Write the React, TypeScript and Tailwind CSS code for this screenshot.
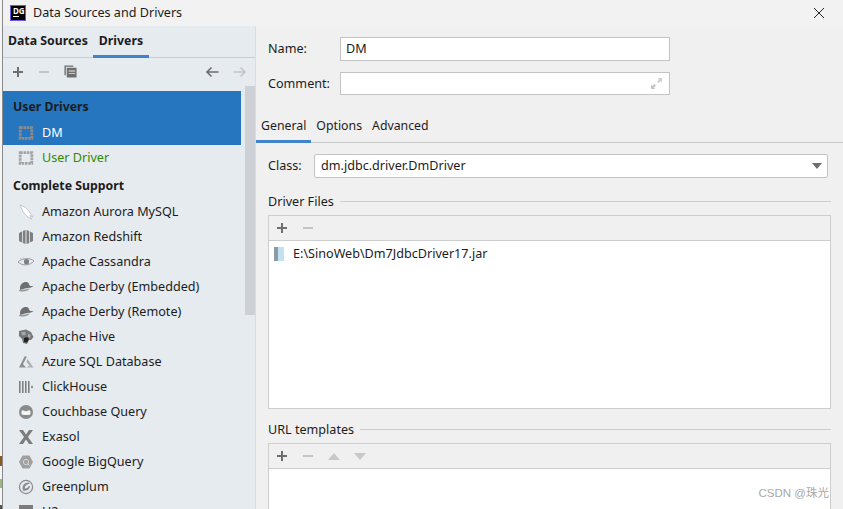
import type { ReactNode } from 'react'

const G = '#8c8c8c'

/* 16px icon wrapper */
function Ico({ children }: { children: ReactNode }) {
  return (
    <svg width="16" height="16" viewBox="0 0 16 16" className="shrink-0">
      {children}
    </svg>
  )
}

// dotted square used for custom drivers
function DriverIcon({ color = G }: { color?: string }) {
  return (
    <Ico>
      <path d="M2.2 2.7 H13.8 V13.3 H2.2Z" fill="none" stroke={color} strokeWidth="2.8" strokeDasharray="2.6 0.7" />
    </Ico>
  )
}

const icons: Record<string, ReactNode> = {
  aurora: (
    <Ico>
      <path d="M2 1 C6 2 10 5 12 9 L15 13 L12 11.5 C12 13 13 14 14 15 C10 14 8 11 6 9 C4 7 4 4 2 1Z" fill="#fff" stroke="#b9bdc1" strokeWidth="0.8" />
    </Ico>
  ),
  redshift: (
    <Ico>
      <path d="M1 4 L4 2.5 V13.5 L1 12Z M4.8 2 L7.5 1 V15 L4.8 14Z M8.5 1 L11.2 2 V14 L8.5 15Z M12 2.5 L15 4 V12 L12 13.5Z" fill="#7f7f7f" />
    </Ico>
  ),
  eye: (
    <Ico>
      <path d="M0 8 C4 4 12 3.5 16 7 C12 12 4 12 0 8Z" fill="none" stroke="#9a9a9a" strokeWidth="1" />
      <circle cx="8.5" cy="7.7" r="2.6" fill="#7f7f7f" />
      <path d="M2 4.5 L4.5 6 M5 3.5 L6.5 5.5 M12 3.5 L11 5" stroke="#aaa" strokeWidth="0.7" />
    </Ico>
  ),
  derby: (
    <Ico>
      <path d="M2 9.5 C2 5 5 2.5 9 3 C11 3.5 11 6 12 7 L15.5 7 C14 8.5 11 9 7 9.5 L2 11Z" fill="#6f6f6f" />
      <path d="M1 12 C6 13.5 10 12 12 9.5 L7 10.5 L1 11Z" fill="#9a9a9a" />
    </Ico>
  ),
  hive: (
    <Ico>
      <path d="M1 2 L8 0.5 L13 3 L15.5 8 L13 11 L11 11 L9 15 L5 14 L4 10 L1 7Z" fill="#777" />
      <path d="M6 9 L9 8 L11 10 L9 13.5 L6 13Z" fill="#222" />
      <path d="M3 3.5 L7 2.5 L8 5.5 L4.5 6.5Z M10 4.5 L13 6 L12 9 L10 8Z" fill="#a8a8a8" />
    </Ico>
  ),
  azure: (
    <Ico>
      <path d="M1 13.5 L6.5 2.5 L9 2.5 L5 10 L8 13.5Z" fill="#8f8f8f" />
      <path d="M9.5 5 L15.5 13.5 L8.5 13.5 L11.5 11.5 L8.5 8Z" fill="#b0b0b0" />
    </Ico>
  ),
  click: (
    <Ico>
      <path d="M1 2 H2.6 V14 H1Z M4 2 H5.6 V14 H4Z M7 2 H8.6 V14 H7Z M10 2 H11.6 V14 H10Z M13.2 6.8 H14.8 V9.2 H13.2Z" fill="#808080" />
    </Ico>
  ),
  couch: (
    <Ico>
      <circle cx="8" cy="8" r="7" fill="#8a8a8a" />
      <path d="M3.5 8.2 C3.5 6 5 6 6 6.8 C7 7.4 9 7.4 10 6.8 C11 6 12.5 6 12.5 8.2 V9.8 C12.5 11 11 11 8 11 C5 11 3.5 11 3.5 9.8Z" fill="#f4f5f6" />
    </Ico>
  ),
  exasol: (
    <Ico>
      <path d="M1 1 H5 L8 5.5 L11 1 H15 L10 8 L15 15 H11 L8 10.5 L5 15 H1 L6 8Z" fill="#7c7c7c" />
    </Ico>
  ),
  bigquery: (
    <Ico>
      <path d="M4.5 1.5 H11.5 L15 8 L11.5 14.5 H4.5 L1 8Z" fill="#a0a0a0" />
      <circle cx="8" cy="8" r="2.6" fill="none" stroke="#d8d8d8" strokeWidth="1" />
      <path d="M9.8 9.8 L11.5 11.5" stroke="#d8d8d8" strokeWidth="1" />
    </Ico>
  ),
  green: (
    <Ico>
      <circle cx="8" cy="8" r="6.6" fill="none" stroke={G} strokeWidth="1.2" />
      <path d="M5 11.5 C3.5 7 6 3.5 11 3.5 L11.5 5 C8.5 5 6.5 7.5 7 9.5 C9 9.5 10.5 8.5 10.5 7 L12 7 C12 10 9 12.5 5 11.5Z" fill={G} />
    </Ico>
  ),
  h2: (
    <Ico>
      <rect x="1" y="1" width="14" height="14" fill="#7c7c7c" />
    </Ico>
  ),
}

const drivers = [
  ['Amazon Aurora MySQL', 'aurora'],
  ['Amazon Redshift', 'redshift'],
  ['Apache Cassandra', 'eye'],
  ['Apache Derby (Embedded)', 'derby'],
  ['Apache Derby (Remote)', 'derby'],
  ['Apache Hive', 'hive'],
  ['Azure SQL Database', 'azure'],
  ['ClickHouse', 'click'],
  ['Couchbase Query', 'couch'],
  ['Exasol', 'exasol'],
  ['Google BigQuery', 'bigquery'],
  ['Greenplum', 'green'],
  ['H2', 'h2'],
]

function Row({ icon, label, className = '' }: { icon: ReactNode; label: string; className?: string }) {
  return (
    <div className={`flex h-[25px] shrink-0 items-center gap-[8px] pl-[15px] ${className}`}>
      {icon}
      <span className="whitespace-nowrap pt-px">{label}</span>
    </div>
  )
}

function Plus({ color = '#6e6e6e' }: { color?: string }) {
  return (
    <svg width="12" height="12" viewBox="0 0 12 12" className="shrink-0">
      <path d="M5 1 H7 V5 H11 V7 H7 V11 H5 V7 H1 V5 H5Z" fill={color} />
    </svg>
  )
}

function Minus() {
  return (
    <svg width="12" height="12" viewBox="0 0 12 12" className="shrink-0">
      <rect x="1" y="5" width="10" height="2" fill="#c4c4c4" />
    </svg>
  )
}

function Arrow({ dir, color }: { dir: 'left' | 'right'; color: string }) {
  return (
    <svg width="14" height="12" viewBox="0 0 14 12" className="shrink-0">
      <path
        d={dir === 'left' ? 'M13.5 6 H2 M6.5 1.5 L2 6 L6.5 10.5' : 'M0.5 6 H12 M7.5 1.5 L12 6 L7.5 10.5'}
        fill="none"
        stroke={color}
        strokeWidth="1.6"
      />
    </svg>
  )
}

function Section({ title }: { title: string }) {
  return (
    <div className="flex items-center gap-[6px]">
      <span className="whitespace-nowrap pt-px">{title}</span>
      <div className="h-px flex-1 bg-[#cdcdcd]" />
    </div>
  )
}

export default function App() {
  return (
    <div
      className="relative flex h-[509px] w-[843px] overflow-hidden bg-[#f0f0f0] text-[12.6px] leading-none text-[#1c1c1c]"
      style={{ fontFamily: '"Noto Sans", sans-serif' }}
    >
      {/* sliver of the window behind */}
      <div className="flex w-[3px] shrink-0 flex-col justify-end border-r border-[#8a8a8a] bg-[#f4f4f4]">
        <div className="mb-[13px] h-[10px] w-[2px] bg-[#8a5a20]" />
        <div className="mb-[17px] h-[9px] w-[2px] bg-[#9cb87a]" />
        <div className="h-[4px] w-[2px] bg-[#555]" />
      </div>

      <div className="flex min-w-0 flex-1 flex-col">
        {/* title bar */}
        <div className="flex h-[26px] shrink-0 items-center bg-[#f2f2f2] pl-[7px] pr-[18px]">
          <div className="flex h-[16px] w-[16px] flex-col border border-[#6b57e0] bg-black px-[2px] pt-[1px] text-[8px] font-bold leading-[8px] text-white">
            DG
            <div className="mt-px h-px w-[6px] bg-white" />
          </div>
          <span className="ml-[7px] whitespace-nowrap pt-px">Data Sources and Drivers</span>
          <svg width="12" height="12" viewBox="0 0 12 12" className="ml-auto">
            <path d="M1 1 L11 11 M11 1 L1 11" stroke="#222" strokeWidth="1" />
          </svg>
        </div>

        <div className="flex min-h-0 flex-1">
          {/* left sidebar */}
          <div className="relative flex w-[252px] shrink-0 flex-col bg-[#e6ebf0]">
            <div className="flex h-[32px] shrink-0 border-b border-[#c9cdd1] pl-[5px] text-[12.3px] font-bold">
              <div className="flex h-[32px] items-center pr-[5px] pb-[1px]">Data Sources</div>
              <div className="flex h-[32px] items-center border-b-[3px] border-[#4083c9] px-[6px] pt-[2px]">Drivers</div>
            </div>
            <div className="flex h-[33px] shrink-0 items-center pb-[6px] pl-[9px] pr-[8px]">
              <Plus />
              <div className="ml-[14px]">
                <Minus />
              </div>
              <svg width="13" height="13" viewBox="0 0 14 14" className="ml-[14px] shrink-0">
                <path d="M0.5 0.5 H10 V2 H2 V11 H0.5Z" fill="#6e6e6e" />
                <path d="M3 3 H13.5 V13.5 H3Z M5 6 V7 H12 V6Z M5 8.5 V9.5 H12 V8.5Z" fill="#6e6e6e" fillRule="evenodd" />
              </svg>
              <div className="ml-auto flex gap-[14px]">
                <Arrow dir="left" color="#6e6e6e" />
                <Arrow dir="right" color="#c4c4c4" />
              </div>
            </div>

            <div className="flex min-h-0 flex-1 flex-col overflow-hidden">
              <div className="mr-[14px] shrink-0 bg-[#2675bf]">
                <div className="flex h-[29px] items-center pl-[10px] pt-[3px] text-[12.3px] font-bold">User Drivers</div>
                <Row icon={<DriverIcon />} label="DM" className="text-white" />
              </div>
              <Row icon={<DriverIcon color="#a3a3a3" />} label="User Driver" className="text-[#2f8a00]" />
              <div className="flex h-[29px] shrink-0 items-center pl-[10px] pt-[3px] text-[12.3px] font-bold">Complete Support</div>
              {drivers.map(([label, icon]) => (
                <Row key={label} icon={icons[icon]} label={label} />
              ))}
            </div>

            {/* scrollbar thumb */}
            <div className="absolute right-0 top-[60px] h-[229px] w-[10px] bg-[#cdd1d5]" />
          </div>

          {/* right panel */}
          <div className="flex min-w-0 flex-1 flex-col border-l border-[#dcdcdc]">
            <div className="flex shrink-0 flex-col gap-[11px] pl-[12px] pt-[11px]">
              <div className="flex items-center">
                <span className="w-[72px]">Name:</span>
                <div className="flex h-[24px] w-[330px] items-center border border-[#c4c4c4] bg-white pl-[5px]">DM</div>
              </div>
              <div className="flex items-center">
                <span className="w-[72px] pt-[2px]">Comment:</span>
                <div className="flex h-[23px] w-[330px] items-center justify-end border border-[#c4c4c4] bg-white pr-[6px]">
                  <svg width="13" height="13" viewBox="0 0 13 13">
                    <path d="M7.5 1 H12 V5.5 L10.5 4 L8.5 6 L7 4.5 L9 2.5Z" fill="#cfcfcf" />
                    <path d="M5.5 12 H1 V7.5 L2.5 9 L4.5 7 L6 8.5 L4 10.5Z" fill="#c4c4c4" />
                  </svg>
                </div>
              </div>
            </div>

            <div className="mt-[17px] flex h-[31px] shrink-0 border-b border-[#c8c8c8] text-[12.3px]">
              <div className="flex h-[31px] items-center border-b-[3px] border-[#4083c9] px-[5px]">General</div>
              <div className="flex h-[31px] items-center pb-[3px] pl-[5px] pr-[5px]">Options</div>
              <div className="flex h-[31px] items-center pb-[3px] pl-[5px]">Advanced</div>
            </div>

            <div className="flex min-h-0 flex-1 flex-col pl-[12px] pr-[12px] pt-[11px]">
              <div className="flex items-center">
                <span className="w-[46px]">Class:</span>
                <div className="mr-[3px] flex h-[24px] flex-1 items-center justify-between rounded-[2px] border border-[#c4c4c4] bg-white pl-[6px] pr-[5px]">
                  dm.jdbc.driver.DmDriver
                  <svg width="10" height="6" viewBox="0 0 10 6">
                    <path d="M0 0 H10 L5 6Z" fill="#6e6e6e" />
                  </svg>
                </div>
              </div>

              <div className="mt-[17px]">
                <Section title="Driver Files" />
              </div>
              <div className="mt-[6px] flex h-[194px] shrink-0 flex-col border border-[#cdcdcd]">
                <div className="flex h-[25px] shrink-0 items-center gap-[14px] border-b border-[#cdcdcd] pl-[7px]">
                  <Plus />
                  <Minus />
                </div>
                <div className="flex-1 bg-white pl-[5px] pt-[5px]">
                  <div className="flex h-[16px] items-center gap-[9px]">
                    <svg width="10" height="14" viewBox="0 0 10 14" className="shrink-0">
                      <rect x="0" y="0" width="4" height="14" fill="#8e9aa3" />
                      <rect x="4" y="0" width="6" height="14" fill="#9fd0e8" />
                      <path d="M4 1 H10 M4 3 H10 M4 5 H10 M4 7 H10 M4 9 H10 M4 11 H10 M4 13 H10" stroke="#e6f3fa" strokeWidth="1" />
                    </svg>
                    <span className="whitespace-nowrap pt-px">E:\SinoWeb\Dm7JdbcDriver17.jar</span>
                  </div>
                </div>
              </div>

              <div className="mt-[14px]">
                <Section title="URL templates" />
              </div>
              <div className="mt-[7px] flex min-h-0 flex-1 flex-col border-x border-t border-[#cdcdcd]">
                <div className="flex h-[25px] shrink-0 items-center gap-[14px] border-b border-[#cdcdcd] pl-[7px]">
                  <Plus />
                  <Minus />
                  <svg width="12" height="7" viewBox="0 0 12 7" className="shrink-0">
                    <path d="M0 7 L6 0 L12 7Z" fill="#c8c8c8" />
                  </svg>
                  <svg width="12" height="7" viewBox="0 0 12 7" className="shrink-0">
                    <path d="M0 0 L6 7 L12 0Z" fill="#c8c8c8" />
                  </svg>
                </div>
                <div className="flex-1 bg-white" />
              </div>
            </div>
          </div>
        </div>
      </div>

      {/* CSDN watermark */}
      <span
        className="absolute right-[14px] top-[488px] text-[11.5px] text-[#a8a8a8]"
        style={{ fontFamily: '"Liberation Sans", "Noto Sans CJK SC", sans-serif' }}
      >
        CSDN @珠光
      </span>
    </div>
  )
}
